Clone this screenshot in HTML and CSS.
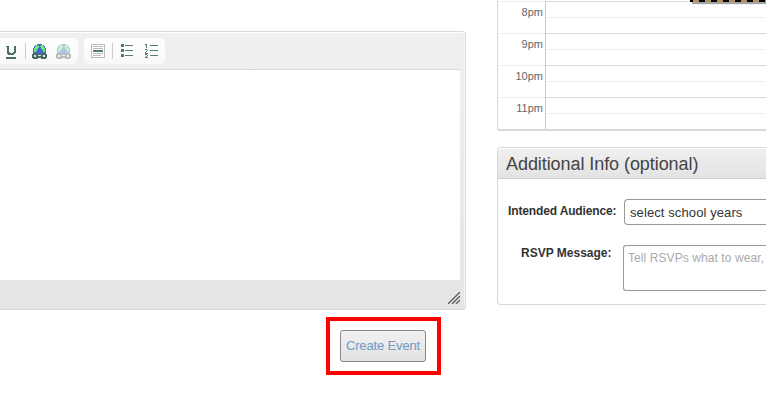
FILE: index.html
```html
<!DOCTYPE html>
<html lang="en">
<head>
<meta charset="utf-8">
<title>Create Event</title>
<link rel="stylesheet" href="styles.css">
</head>
<body>
<main class="page">
  <section class="left">
    <div class="editor">
      <div class="toolbar">
        <div class="group group-format">
          <svg class="icon" width="16" height="16" viewBox="0 0 16 16"><path d="M2 1h3v6h1v1h3V7h1V1h2v7h-1v1h-1v1H4V9H3V2H2zM2 12h10v2H2z" fill="#49706a"/></svg>
          <i class="sep"></i>
          <svg class="icon globe" width="16" height="16" viewBox="0 0 16 16"><use href="#globe"/></svg>
          <svg class="icon globe faded" width="16" height="16" viewBox="0 0 16 16"><use href="#globe"/></svg>
        </div>
        <div class="group group-list">
          <svg class="icon" width="14" height="14" viewBox="0 0 14 14"><path fill="#fff" stroke="#bbb" d="M.5 .5h13v13H.5z"/><path fill="#bbb" d="M2 2h10v1H2zM2 4h10v1H2zM2 9h10v1H2zM2 11h8v1H2z"/><path fill="#527d72" d="M2 6h10v2H2z"/></svg>
          <i class="sep"></i>
          <svg class="icon bullets" width="14" height="14" viewBox="0 0 14 14"><path fill="#527d72" d="M1 0h3v3H1zM1 5h3v3H1zM1 10h3v3H1zM5 1h8v1H5zM5 6h8v1H5zM5 11h8v1H5z"/></svg>
          <svg class="icon numbers" width="14" height="14" viewBox="0 0 14 14"><path fill="#527d72" d="M0 0h2v4H1V1H0zM0 5h2v1h1v1H2v1H1v1h2v1H0V8h1V7h1V6H0zM0 10h2v1h1v1H2v1h1v1H0v-1h1v-1h1v-1H0zM5 1h8v1H5zM5 6h8v1H5zM5 11h8v1H5z"/></svg>
        </div>
      </div>
      <div class="content"></div>
      <div class="status">
        <svg class="grip" width="12" height="12" viewBox="0 0 12 12"><path d="M0 12L12 0M4 12l8-8M8 12l4-4" fill="none" stroke="#5f5f59" stroke-width="1.4"/></svg>
      </div>
    </div>
    <div class="highlight"><button class="create">Create Event</button></div>
  </section>
  <section class="right">
    <div class="calendar">
      <div class="hour"><span class="time">8pm</span><span class="slot"></span></div>
      <div class="hour"><span class="time">9pm</span><span class="slot"></span></div>
      <div class="hour"><span class="time">10pm</span><span class="slot"></span></div>
      <div class="hour"><span class="time">11pm</span><span class="slot"></span></div>
      <div class="event"></div>
    </div>
    <div class="panel">
      <h2>Additional Info (optional)</h2>
      <div class="row audience"><label>Intended Audience:</label><div class="select">select school years</div></div>
      <div class="row message"><label>RSVP Message:</label><div class="textarea">Tell RSVPs what to wear,</div></div>
    </div>
  </section>
</main>
<svg width="0" height="0" class="defs">
  <defs><g id="globe">
    <path fill="#416fc8" d="M5 0h5v1h2v1h1v2h1v6H1V4h1V2h1V1h2z"/>
    <path fill="#74e283" d="M4 1h2v1h1v2H6v1H5v2H4v1H2V4h1V2h1zM9 1h2v1h1v2h1v4h-2V6h-1V5H9V3H8V2h1z"/>
    <path fill="#4c6a66" d="M1 9h5v1h3V9h5v1h1v4h-1v1H9v-1H6v1H1v-1H0v-4h1z"/>
    <path fill="#d8e4df" d="M2 11h2v2H2zM6 11h3v1H6zM11 11h2v2h-2z"/>
  </g></defs>
</svg>
</body>
</html>
```

FILE: styles.css
```css
* { box-sizing: border-box; }
body {
  margin: 0;
  background: #fff;
  font-family: "Liberation Sans", Arial, sans-serif;
  color: #333;
}
.page {
  display: flex;
  width: 766px;
  height: 400px;
  overflow: hidden;
}
.defs { position: absolute; }
.left { width: 466px; padding-top: 31px; flex: none; }
.editor {
  height: 279px;
  border: 1px solid #d8d8d8;
  border-left: 0;
  border-radius: 0 4px 4px 0;
  background: linear-gradient(#f0f0f0, #e5e5e5);
  box-shadow: inset 0 1px #fff, inset -1px 0 #f5f5f5;
  display: flex;
  flex-direction: column;
}
.toolbar { display: flex; gap: 6px; height: 37px; padding-top: 6px; }
.group {
  display: flex;
  align-items: flex-start;
  height: 26px;
  border-radius: 5px;
  background: linear-gradient(#fff, #f8f8f8);
}
.group-format { width: 78px; padding: 7px 0 0 4px; border-radius: 0 5px 5px 0; }
.group-list { width: 81px; padding: 6px 0 0 7px; }
.icon { display: block; flex: none; }
.sep { width: 1px; height: 16px; background: #ccc; margin: -2px 6px 0 5px; }
.group-list .sep { margin: -1px 7px 0 7px; }
.globe { margin-top: -1px; }
.faded { opacity: .4; margin-left: 8px; }
.numbers { margin-left: 11px; }
.content { height: 211px; margin-right: 5px; background: #fff; border-top: 1px solid #d6d6d6; }
.status {
  flex: 1;
  display: flex;
  justify-content: flex-end;
  margin-right: 1px;
  padding: 12px 4px 0 0;
  background: #e5e5e5;
}
.highlight {
  width: 115px;
  height: 58px;
  margin: 7px 0 0 326px;
  border: 4px solid #f00;
  display: flex;
  padding: 9px 0 0 10px;
}
.create {
  width: 86px;
  height: 32px;
  padding: 0 0 1px;
  border: 1px solid #888;
  border-radius: 3px;
  background: linear-gradient(#f1f1f1, #e2e2e2);
  color: #7199c1;
  font: 13px "Liberation Sans", Arial, sans-serif;
  letter-spacing: -.15px;
  white-space: nowrap;
}
.right { margin-left: 31px; width: 269px; flex: none; }
.calendar {
  position: relative;
  height: 131px;
  padding-top: 1px;
  border: solid #d9d9d9;
  border-width: 0 0 2px 1px;
  border-radius: 0 0 0 3px;
}
.hour { display: flex; height: 32px; }
.time {
  width: 47px;
  padding: 3px 2px 0 0;
  border-top: 1px solid #eee;
  text-align: right;
  font-size: 11px;
  line-height: 14px;
  color: #666;
}
.slot {
  flex: 1;
  border-left: 1px solid #f5d21d;
  background: linear-gradient(#d9d9d9 1px, transparent 1px 16px, #ededed 16px 17px, transparent 17px);
}
.event {
  position: absolute;
  top: 0;
  left: 192px;
  right: 0;
  height: 2px;
  background: repeating-linear-gradient(90deg, #000 0 3px, #b3905d 3px 9px, #000 9px 12px);
  box-shadow: 2px 2px 1px rgba(0, 0, 0, .4);
}
.panel {
  height: 158px;
  margin-top: 16px;
  border: 1px solid #d8d8d8;
  border-right: 0;
  border-radius: 4px 0 0 4px;
}
h2 {
  height: 31px;
  margin: 0;
  padding: 0 0 0 8px;
  border-bottom: 1px solid #d2d2d2;
  border-radius: 3px 0 0;
  background: linear-gradient(#f0f0f0, #e3e3e3);
  box-shadow: inset 0 1px #fff;
  font-size: 18px;
  font-weight: normal;
  line-height: 32px;
  letter-spacing: -.07px;
  white-space: nowrap;
  color: #444;
}
.row { display: flex; }
label { font-size: 12px; font-weight: bold; line-height: 14px; white-space: nowrap; }
.audience { padding: 20px 0 0 10px; }
.audience label { width: 116px; padding-top: 5px; letter-spacing: -.14px; }
.select, .textarea { border: 1px solid #999; border-right: 0; flex: 1; white-space: nowrap; overflow: hidden; }
.select { height: 26px; border-radius: 4px 0 0 4px; padding-left: 5px; font-size: 13px; line-height: 25px; color: #333; letter-spacing: .1px; }
.message { padding: 20px 0 0 23px; }
.message label { width: 102px; padding-top: 1px; }
.textarea { height: 46px; border-radius: 3px 0 0 3px; padding: 5px 0 0 4px; font-size: 12px; line-height: 14px; letter-spacing: .08px; color: #aaa; }
```
